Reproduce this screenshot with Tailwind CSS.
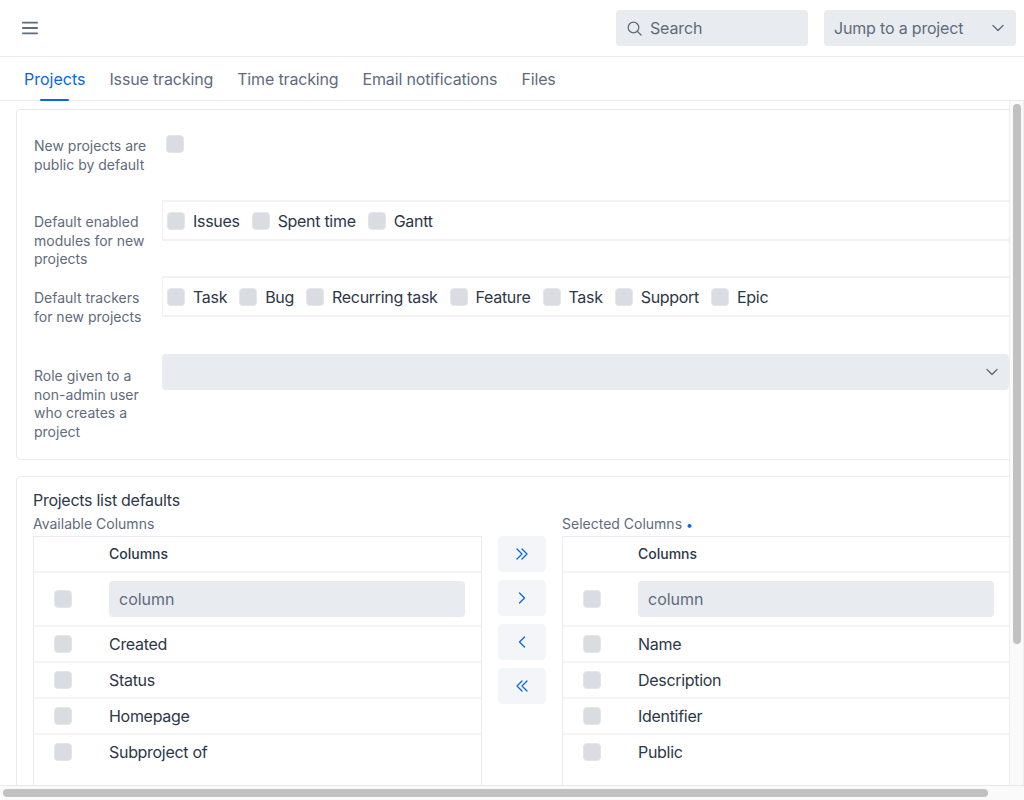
<!DOCTYPE html>
<html>
<head>
<meta charset="utf-8">
<script src="https://cdn.jsdelivr.net/npm/@tailwindcss/browser@4"></script>
</head>
<body class="bg-white font-['Inter',sans-serif] text-[#2d3748] overflow-hidden">
<div class="relative w-[1024px] h-[800px] overflow-hidden flex flex-col">
  <header class="h-[57px] shrink-0 border-b border-[#e8ebf0] flex items-center pl-[22px] pr-2">
    <svg class="w-4 h-4 text-[#5f6b7c] -mt-px" viewBox="0 0 16 16" fill="none" stroke="currentColor" stroke-width="1.8" stroke-linecap="round"><path d="M0.9 2.7H15.1M0.9 8H15.1M0.9 13.3H15.1"/></svg>
    <div class="ml-auto flex gap-4">
      <div class="w-[192px] h-9 rounded-[4px] bg-[#e8ebf0] flex items-center pl-[11px] gap-2 text-base tracking-[-0.15px] text-[#5f6b7c]">
        <svg class="w-[15px] h-[15px]" viewBox="0 0 15 15" fill="none" stroke="currentColor" stroke-width="1.3" stroke-linecap="round"><circle cx="6.5" cy="6.5" r="5.3"/><path d="M10.4 10.4L14 14"/></svg>
        <span>Search</span>
      </div>
      <div class="w-[192px] h-9 rounded-[4px] bg-[#e8ebf0] flex items-center pl-[10px] pr-3 text-base tracking-[-0.18px] text-[#5f6b7c]">
        <span>Jump to a project</span>
        <svg class="ml-auto w-3 h-2" viewBox="0 0 12 8" fill="none" stroke="currentColor" stroke-width="1.3" stroke-linecap="round" stroke-linejoin="round"><path d="M1 1.5L6 6.5L11 1.5"/></svg>
      </div>
    </div>
  </header>

  <nav class="h-[44px] shrink-0 border-b border-[#e8ebf0] flex gap-6 pl-6 text-base tracking-[-0.15px] text-[#5f6b7c]">
    <a class="relative h-full flex items-center tracking-normal text-[#0b66e4]">Projects<span class="absolute left-4 right-4 -bottom-px h-[2px] bg-[#0b66e4] rounded-full"></span></a>
    <a class="h-full flex items-center">Issue tracking</a>
    <a class="h-full flex items-center">Time tracking</a>
    <a class="h-full flex items-center">Email notifications</a>
    <a class="h-full flex items-center">Files</a>
  </nav>

  <div class="flex-1 flex min-h-0">
    <main class="w-[1009px] h-[685px] shrink-0 overflow-hidden">
      <div class="w-[1060px] pl-4 pt-2">
        <section class="h-[351px] border border-[#e8ebf0] rounded-[4px] pl-[17px] pt-[25px] flex flex-col text-sm leading-[18.67px] text-[#5f6b7c]">
          <div class="flex h-[76px]">
            <div class="w-[128px] shrink-0 pt-[2px]">New projects are<br>public by default</div>
            <div class="w-[18px] h-[18px] ml-1 rounded-[4px] bg-[#d9dce1] border border-[#e3e6ea]"></div>
          </div>
          <div class="flex h-[76px]">
            <div class="w-[128px] shrink-0 pt-[2px]">Default enabled<br>modules for new<br>projects</div>
            <div class="flex-1 h-[41px] -mt-[11px] border-y-2 border-l border-[#f0f2f5] flex items-center gap-3 pl-1 text-base tracking-[-0.3px] text-[#2d3748]">
              <label class="flex items-center gap-2"><i class="w-[18px] h-[18px] rounded-[4px] bg-[#d9dce1] border border-[#e3e6ea]"></i>Issues</label>
              <label class="flex items-center gap-2"><i class="w-[18px] h-[18px] rounded-[4px] bg-[#d9dce1] border border-[#e3e6ea]"></i>Spent time</label>
              <label class="flex items-center gap-2"><i class="w-[18px] h-[18px] rounded-[4px] bg-[#d9dce1] border border-[#e3e6ea]"></i>Gantt</label>
            </div>
          </div>
          <div class="flex h-[78px]">
            <div class="w-[128px] shrink-0 pt-[2px]">Default trackers<br>for new projects</div>
            <div class="flex-1 h-[41px] -mt-[11px] border-y-2 border-l border-[#f0f2f5] flex items-center gap-3 pl-1 text-base tracking-[-0.3px] text-[#2d3748]">
              <label class="flex items-center gap-2"><i class="w-[18px] h-[18px] rounded-[4px] bg-[#d9dce1] border border-[#e3e6ea]"></i>Task</label>
              <label class="flex items-center gap-2"><i class="w-[18px] h-[18px] rounded-[4px] bg-[#d9dce1] border border-[#e3e6ea]"></i>Bug</label>
              <label class="flex items-center gap-2"><i class="w-[18px] h-[18px] rounded-[4px] bg-[#d9dce1] border border-[#e3e6ea]"></i>Recurring task</label>
              <label class="flex items-center gap-2"><i class="w-[18px] h-[18px] rounded-[4px] bg-[#d9dce1] border border-[#e3e6ea]"></i>Feature</label>
              <label class="flex items-center gap-2"><i class="w-[18px] h-[18px] rounded-[4px] bg-[#d9dce1] border border-[#e3e6ea]"></i>Task</label>
              <label class="flex items-center gap-2"><i class="w-[18px] h-[18px] rounded-[4px] bg-[#d9dce1] border border-[#e3e6ea]"></i>Support</label>
              <label class="flex items-center gap-2"><i class="w-[18px] h-[18px] rounded-[4px] bg-[#d9dce1] border border-[#e3e6ea]"></i>Epic</label>
            </div>
          </div>
          <div class="flex">
            <div class="w-[128px] shrink-0 pt-[2px]">Role given to a<br>non-admin user<br>who creates a<br>project</div>
            <div class="w-[847px] shrink-0 h-9 -mt-[11px] rounded-[4px] bg-[#e8ebf0] flex items-center pr-[11px] text-[#5f6b7c]">
              <svg class="ml-auto w-3 h-2" viewBox="0 0 12 8" fill="none" stroke="currentColor" stroke-width="1.3" stroke-linecap="round" stroke-linejoin="round"><path d="M1 1.5L6 6.5L11 1.5"/></svg>
            </div>
          </div>
        </section>

        <section class="mt-4 border border-[#e8ebf0] rounded-[4px] pl-4 pt-[13px] h-[400px]">
          <h3 class="text-base leading-5 tracking-[-0.27px] text-[#2d3748]">Projects list defaults</h3>
          <div class="flex mt-[2px]">
            <div class="w-[449px] shrink-0">
              <div class="text-sm leading-6 h-6 text-[#5f6b7c]">Available Columns</div>
              <div class="border border-[#e8ebf0] h-[300px] text-base">
                <div class="h-[36px] border-b-2 border-[#f3f4f6] flex items-center pl-[75px] text-sm font-medium text-[#2d3748]">Columns</div>
                <div class="h-[54px] border-b-2 border-[#f3f4f6] flex items-center pl-5">
                  <i class="w-[18px] h-[18px] rounded-[4px] bg-[#d9dce1] border border-[#e3e6ea] shrink-0"></i>
                  <div class="ml-[37px] w-[356px] h-9 rounded-[4px] bg-[#e8ebf0] flex items-center pl-[10px] text-[#5f6b7c]">column</div>
                </div>
                <div class="h-[36px] border-b-2 border-[#f3f4f6] flex items-center pl-5 tracking-[-0.3px]"><i class="w-[18px] h-[18px] rounded-[4px] bg-[#d9dce1] border border-[#e3e6ea] shrink-0"></i><span class="ml-[37px]">Created</span></div>
                <div class="h-[36px] border-b-2 border-[#f3f4f6] flex items-center pl-5 tracking-[-0.3px]"><i class="w-[18px] h-[18px] rounded-[4px] bg-[#d9dce1] border border-[#e3e6ea] shrink-0"></i><span class="ml-[37px]">Status</span></div>
                <div class="h-[36px] border-b-2 border-[#f3f4f6] flex items-center pl-5 tracking-[-0.3px]"><i class="w-[18px] h-[18px] rounded-[4px] bg-[#d9dce1] border border-[#e3e6ea] shrink-0"></i><span class="ml-[37px]">Homepage</span></div>
                <div class="h-[36px] border-b-2 border-transparent flex items-center pl-5 tracking-[-0.3px]"><i class="w-[18px] h-[18px] rounded-[4px] bg-[#d9dce1] border border-[#e3e6ea] shrink-0"></i><span class="ml-[37px]">Subproject of</span></div>
              </div>
            </div>
            <div class="w-[48px] mx-4 shrink-0 pt-6 flex flex-col gap-2 text-[#0b66e4]">
              <div class="h-9 rounded-[4px] bg-[#f3f5f8] flex items-center justify-center"><svg class="w-[14px] h-[14px]" viewBox="0 0 14 14" fill="none" stroke="currentColor" stroke-width="1.3" stroke-linecap="round" stroke-linejoin="round"><path d="M2 2L7 7L2 12M7 2L12 7L7 12"/></svg></div>
              <div class="h-9 rounded-[4px] bg-[#f3f5f8] flex items-center justify-center"><svg class="w-[14px] h-[14px]" viewBox="0 0 14 14" fill="none" stroke="currentColor" stroke-width="1.3" stroke-linecap="round" stroke-linejoin="round"><path d="M4.5 2L9.5 7L4.5 12"/></svg></div>
              <div class="h-9 rounded-[4px] bg-[#f3f5f8] flex items-center justify-center"><svg class="w-[14px] h-[14px]" viewBox="0 0 14 14" fill="none" stroke="currentColor" stroke-width="1.3" stroke-linecap="round" stroke-linejoin="round"><path d="M9.5 2L4.5 7L9.5 12"/></svg></div>
              <div class="h-9 rounded-[4px] bg-[#f3f5f8] flex items-center justify-center"><svg class="w-[14px] h-[14px]" viewBox="0 0 14 14" fill="none" stroke="currentColor" stroke-width="1.3" stroke-linecap="round" stroke-linejoin="round"><path d="M7 2L2 7L7 12M12 2L7 7L12 12"/></svg></div>
            </div>
            <div class="w-[480px] shrink-0">
              <div class="text-sm leading-6 h-6 text-[#5f6b7c]">Selected Columns <span class="text-[#0b66e4] text-xs">•</span></div>
              <div class="border border-[#e8ebf0] h-[300px] text-base">
                <div class="h-[36px] border-b-2 border-[#f3f4f6] flex items-center pl-[75px] text-sm font-medium text-[#2d3748]">Columns</div>
                <div class="h-[54px] border-b-2 border-[#f3f4f6] flex items-center pl-5">
                  <i class="w-[18px] h-[18px] rounded-[4px] bg-[#d9dce1] border border-[#e3e6ea] shrink-0"></i>
                  <div class="ml-[37px] w-[356px] h-9 rounded-[4px] bg-[#e8ebf0] flex items-center pl-[10px] text-[#5f6b7c]">column</div>
                </div>
                <div class="h-[36px] border-b-2 border-[#f3f4f6] flex items-center pl-5 tracking-[-0.3px]"><i class="w-[18px] h-[18px] rounded-[4px] bg-[#d9dce1] border border-[#e3e6ea] shrink-0"></i><span class="ml-[37px]">Name</span></div>
                <div class="h-[36px] border-b-2 border-[#f3f4f6] flex items-center pl-5 tracking-[-0.3px]"><i class="w-[18px] h-[18px] rounded-[4px] bg-[#d9dce1] border border-[#e3e6ea] shrink-0"></i><span class="ml-[37px]">Description</span></div>
                <div class="h-[36px] border-b-2 border-[#f3f4f6] flex items-center pl-5 tracking-[-0.3px]"><i class="w-[18px] h-[18px] rounded-[4px] bg-[#d9dce1] border border-[#e3e6ea] shrink-0"></i><span class="ml-[37px]">Identifier</span></div>
                <div class="h-[36px] border-b-2 border-transparent flex items-center pl-5 tracking-[-0.3px]"><i class="w-[18px] h-[18px] rounded-[4px] bg-[#d9dce1] border border-[#e3e6ea] shrink-0"></i><span class="ml-[37px]">Public</span></div>
              </div>
            </div>
          </div>
        </section>
      </div>
    </main>
  </div>

  <div class="absolute left-[1009px] right-0 top-[101px] bottom-[14px] bg-[#fafafa] border-x border-[#eeeeee]"><div class="absolute left-[3px] top-[3px] w-2 h-[540px] rounded-full bg-[#c1c1c1]"></div></div>
  <div class="absolute left-0 right-0 bottom-0 h-[15px] bg-[#fafafa] border-t border-[#e8e8e8]"><div class="absolute left-[3px] top-[3px] w-[985px] h-2 rounded-full bg-[#c1c1c1]"></div></div>
</div>
</body>
</html>
